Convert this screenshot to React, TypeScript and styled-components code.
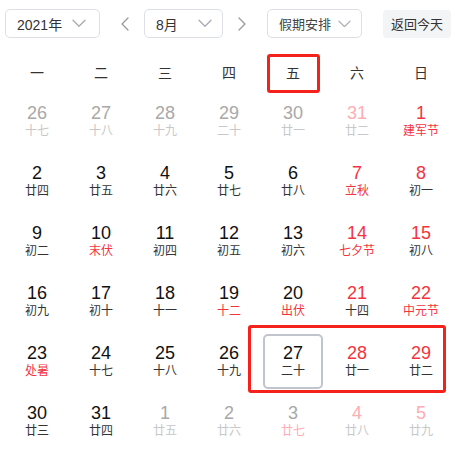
import styled, { createGlobalStyle } from "styled-components";

const GlobalStyle = createGlobalStyle`
  body {
    margin: 0;
    background: #fff;
    font-family: "Liberation Sans", "Noto Sans CJK SC", sans-serif;
    color: #333;
  }
`;

const Page = styled.div`
  width: 461px;
  height: 454px;
  overflow: hidden;
`;

const Toolbar = styled.div`
  display: flex;
  align-items: center;
  padding: 9px 0 0 5px;
  height: 29px;
`;

const Select = styled.div<{ $w: number; $chevronGap: number }>`
  box-sizing: border-box;
  flex-shrink: 0;
  width: ${(p) => p.$w}px;
  height: 29px;
  border: 1px solid #dcdfe6;
  border-radius: 5px;
  display: flex;
  align-items: center;
  justify-content: space-between;
  padding: 0 ${(p) => p.$chevronGap}px 0 11px;
  font-size: 14px;
  color: #333;
`;

const HolidayText = styled.span`
  font-size: 13px;
  color: #444;
`;

const ArrowBtn = styled.div<{ $shift: number }>`
  box-sizing: border-box;
  flex-shrink: 0;
  width: 44px;
  display: flex;
  justify-content: center;
  align-items: center;
  padding-left: ${(p) => (p.$shift > 0 ? p.$shift : 0)}px;
  padding-right: ${(p) => (p.$shift < 0 ? -p.$shift : 0)}px;
`;

const TodayBtn = styled.div`
  flex-shrink: 0;
  white-space: nowrap;
  margin-left: 21px;
  height: 28px;
  padding: 0 8px;
  display: flex;
  align-items: center;
  background: #f3f4f6;
  border-radius: 4px;
  font-size: 13px;
  color: #333;
`;

const Board = styled.div`
  position: relative;
  margin: 14px 0 0 5px;
  width: 448px;
`;

const Grid = styled.div`
  display: grid;
  grid-template-columns: repeat(7, 64px);
`;

const WeekLabel = styled.div`
  height: 39px;
  display: flex;
  align-items: center;
  justify-content: center;
  font-size: 14px;
  color: #333;
`;

const Cell = styled.div`
  height: 60px;
  display: flex;
  align-items: center;
  justify-content: center;
`;

const DayBox = styled.div<{ $today?: boolean }>`
  box-sizing: border-box;
  width: 60px;
  height: 55px;
  border-radius: 5px;
  border: 2px solid ${(p) => (p.$today ? "#c0c4cc" : "transparent")};
  display: flex;
  flex-direction: column;
  align-items: center;
  justify-content: center;
  padding-top: 1px;
`;

const DayNum = styled.div<{ $color: string }>`
  font-size: 18px;
  line-height: 20px;
  color: ${(p) => p.$color};
`;

const Lunar = styled.div<{ $color: string }>`
  font-size: 12px;
  line-height: 17px;
  color: ${(p) => p.$color};
`;

const Mark = styled.div`
  position: absolute;
  box-sizing: border-box;
  border: 3px solid #f5221b;
  border-radius: 3px;
  pointer-events: none;
`;

function Chevron({ size = 14 }: { size?: number }) {
  return (
    <svg width={size} height={size * 0.6} viewBox="0 0 14 8" fill="none">
      <path d="M1 1l6 6 6-6" stroke="#a8abb2" strokeWidth="1.3" strokeLinecap="round" strokeLinejoin="round" />
    </svg>
  );
}

function Side({ dir }: { dir: "left" | "right" }) {
  return (
    <svg width="8" height="14" viewBox="0 0 8 14" fill="none">
      <path
        d={dir === "left" ? "M7 1L1 7l6 6" : "M1 1l6 6-6 6"}
        stroke="#999"
        strokeWidth="1.3"
        strokeLinecap="round"
        strokeLinejoin="round"
      />
    </svg>
  );
}

type Day = { d: number; l: string; nc: string; lc: string; today?: boolean };

const BLACK = "#111";
const LUNAR = "#333";
const RED = "#f5333f";
const GREY = "#a8a8a8";
const LGREY = "#c8c8c8";
const PINK = "#ffadb3";

const mk = (d: number, l: string, nc = BLACK, lc = LUNAR, today = false): Day => ({ d, l, nc, lc, today });

// 7월 말 ~ 9월 초
const days: Day[] = [
  mk(26, "十七", GREY, LGREY),
  mk(27, "十八", GREY, LGREY),
  mk(28, "十九", GREY, LGREY),
  mk(29, "二十", GREY, LGREY),
  mk(30, "廿一", GREY, LGREY),
  mk(31, "廿二", PINK, LGREY),
  mk(1, "建军节", RED, RED),
  mk(2, "廿四"),
  mk(3, "廿五"),
  mk(4, "廿六"),
  mk(5, "廿七"),
  mk(6, "廿八"),
  mk(7, "立秋", RED, RED),
  mk(8, "初一", RED),
  mk(9, "初二"),
  mk(10, "末伏", BLACK, RED),
  mk(11, "初四"),
  mk(12, "初五"),
  mk(13, "初六"),
  mk(14, "七夕节", RED, RED),
  mk(15, "初八", RED),
  mk(16, "初九"),
  mk(17, "初十"),
  mk(18, "十一"),
  mk(19, "十二", BLACK, RED),
  mk(20, "出伏", BLACK, RED),
  mk(21, "十四", RED),
  mk(22, "中元节", RED, RED),
  mk(23, "处暑", BLACK, RED),
  mk(24, "十七"),
  mk(25, "十八"),
  mk(26, "十九"),
  mk(27, "二十", BLACK, LUNAR, true),
  mk(28, "廿一", RED),
  mk(29, "廿二", RED),
  mk(30, "廿三"),
  mk(31, "廿四"),
  mk(1, "廿五", GREY, LGREY),
  mk(2, "廿六", GREY, LGREY),
  mk(3, "廿七", GREY, PINK),
  mk(4, "廿八", PINK, LGREY),
  mk(5, "廿九", PINK, LGREY),
];

const weeks = ["一", "二", "三", "四", "五", "六", "日"];

export default function App() {
  return (
    <Page>
      <GlobalStyle />
      <Toolbar>
        <Select $w={95} $chevronGap={13}>
          <span>2021年</span>
          <Chevron />
        </Select>
        <ArrowBtn $shift={5}>
          <Side dir="left" />
        </ArrowBtn>
        <Select $w={79} $chevronGap={10}>
          <span>8月</span>
          <Chevron />
        </Select>
        <ArrowBtn $shift={-6}>
          <Side dir="right" />
        </ArrowBtn>
        <Select $w={95} $chevronGap={10}>
          <HolidayText>假期安排</HolidayText>
          <Chevron size={13} />
        </Select>
        <TodayBtn>返回今天</TodayBtn>
      </Toolbar>
      <Board>
        <Grid>
          {weeks.map((w) => (
            <WeekLabel key={w}>{w}</WeekLabel>
          ))}
          {days.map((day, i) => (
            <Cell key={i}>
              <DayBox $today={day.today}>
                <DayNum $color={day.nc}>{day.d}</DayNum>
                <Lunar $color={day.lc}>{day.l}</Lunar>
              </DayBox>
            </Cell>
          ))}
        </Grid>
        <Mark style={{ left: 262, top: 2, width: 53, height: 39 }} />
        <Mark style={{ left: 243, top: 273, width: 198, height: 68 }} />
      </Board>
    </Page>
  );
}
